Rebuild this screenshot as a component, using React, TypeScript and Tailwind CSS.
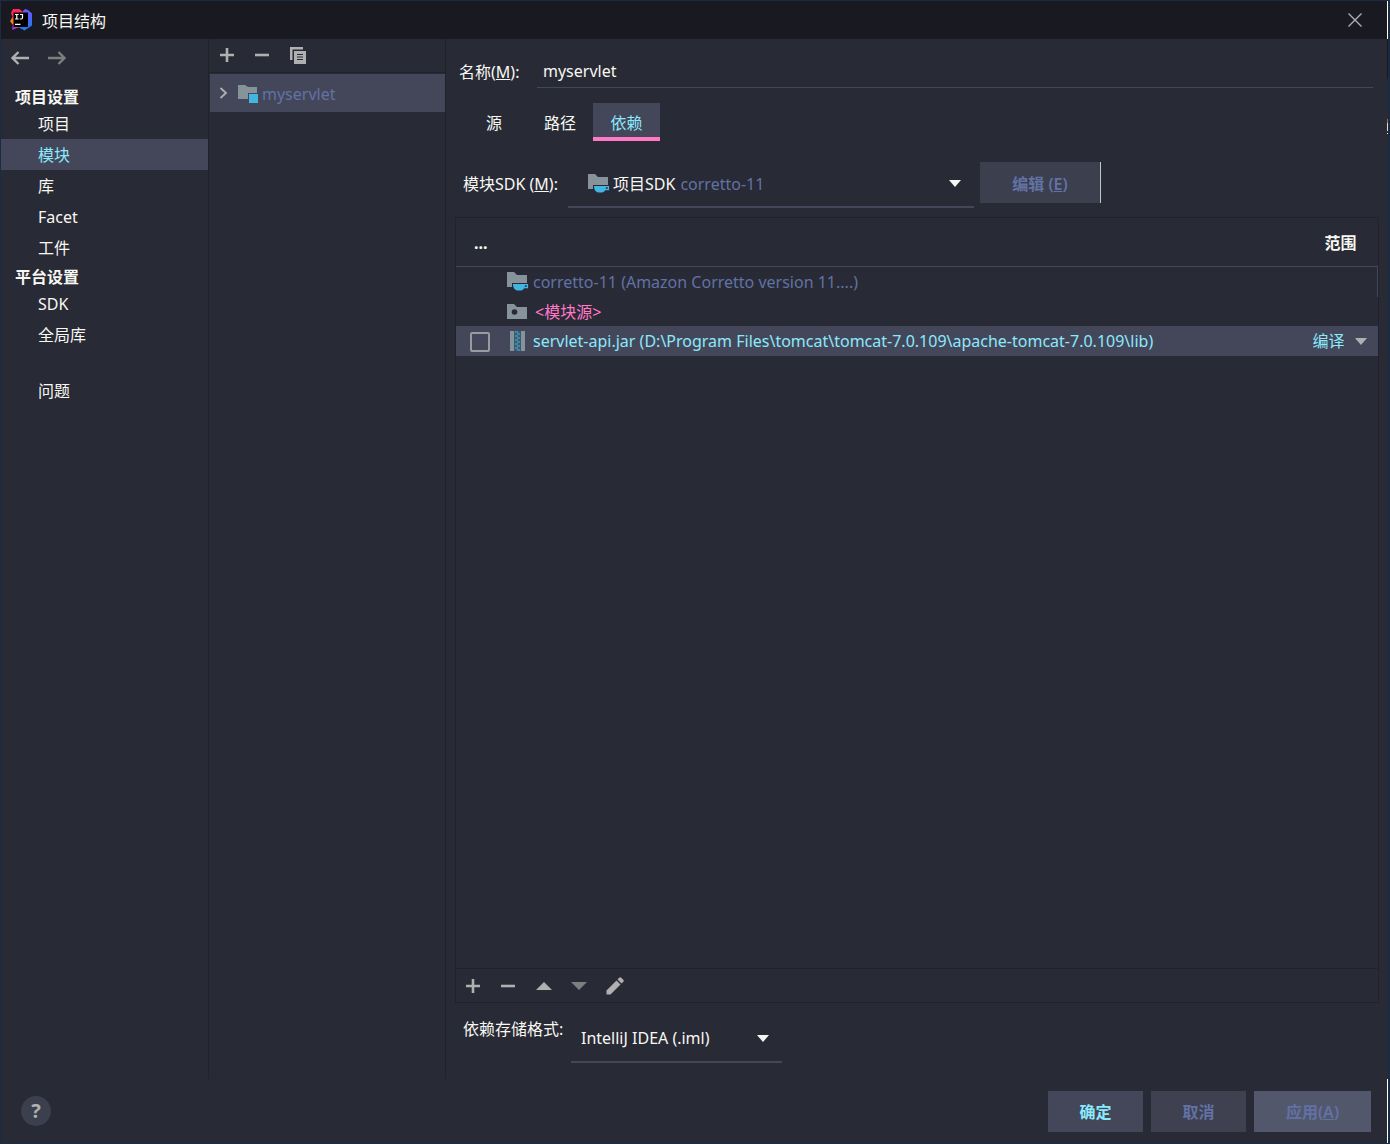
import React from 'react';

interface NavGroup {
  title: string;
  items: string[];
}

const navGroups: NavGroup[] = [
  { title: '项目设置', items: ['项目', '模块', '库', 'Facet', '工件'] },
  { title: '平台设置', items: ['SDK', '全局库'] },
];

/* ---------- icons ---------- */

const IdeaLogo: React.FC = () => (
  <svg width="24" height="24" viewBox="0 0 24 24" aria-hidden="true">
    <defs>
      <linearGradient id="ideaPink" x1="0" y1="0" x2="0" y2="1">
        <stop offset="0" stopColor="#fe2857" />
        <stop offset="0.55" stopColor="#f8365a" />
        <stop offset="1" stopColor="#9039d0" />
      </linearGradient>
      <linearGradient id="ideaBlue" x1="0" y1="0" x2="0" y2="1">
        <stop offset="0" stopColor="#6b57ff" />
        <stop offset="1" stopColor="#1d7bf0" />
      </linearGradient>
    </defs>
    <path d="M13 4L16 1L19 2L23 5.500V17.500L15.500 22.500L9 19Z" fill="url(#ideaBlue)" />
    <path d="M4 1H10.500L16 6L11 19L3 22L4 15L2 11L3.500 9L2 5Z" fill="url(#ideaPink)" />
    <path d="M1 13L4.500 9.500L6 15L3.500 16.500Z" fill="#fc801d" />
    <rect x="4.500" y="4.500" width="14.500" height="14.500" fill="#000" />
    <path d="M6 6.500H9.600M7.800 6.500V11M6 11H9.600M11 6.500H13.500V9.800Q13.500 11 12.200 11H10.800M6 16.300H11.500" stroke="#fff" strokeWidth="1.200" fill="none" />
  </svg>
);

const ArrowIcon: React.FC<{ flip?: boolean }> = ({ flip }) => (
  <svg width="18" height="14" viewBox="0 0 18 14" aria-hidden="true" className={flip ? 'rotate-180' : ''}>
    <path d="M7.500 1L1.500 7L7.500 13M2 7H18" fill="none" stroke="currentColor" strokeWidth="2.400" />
  </svg>
);

const PlusIcon: React.FC = () => (
  <svg width="14" height="14" viewBox="0 0 14 14" aria-hidden="true">
    <path d="M0 7H14M7 0V14" stroke="currentColor" strokeWidth="2.600" />
  </svg>
);

const MinusIcon: React.FC = () => (
  <svg width="14" height="14" viewBox="0 0 14 14" aria-hidden="true">
    <path d="M0 7H14" stroke="currentColor" strokeWidth="2.600" />
  </svg>
);

const CopyIcon: React.FC = () => (
  <svg width="16" height="17" viewBox="0 0 16 17" aria-hidden="true">
    <path d="M0 0H13V2.500H2.500V13H0Z" fill="currentColor" />
    <path d="M4 4H16V17H4Z" fill="currentColor" />
    <path d="M7 7.500H13M7 10H13M7 12.500H13" stroke="#282a36" strokeWidth="1.200" />
  </svg>
);

const TriangleIcon: React.FC<{ up?: boolean; className?: string }> = ({ up, className }) => (
  <svg width="16" height="8" viewBox="0 0 16 8" aria-hidden="true" className={className}>
    <path d={up ? 'M8 0L16 8H0Z' : 'M0 0H16L8 8Z'} fill="currentColor" />
  </svg>
);

const ChevronDown: React.FC<{ className?: string }> = ({ className = '' }) => (
  <svg width="12" height="7" viewBox="0 0 12 7" aria-hidden="true" className={`pointer-events-none shrink-0 ${className}`}>
    <path d="M0 0H12L6 7Z" fill="currentColor" />
  </svg>
);

const PencilIcon: React.FC = () => (
  <svg width="18" height="18" viewBox="0 0 18 18" aria-hidden="true">
    <path d="M0.500 17.500V13.500L10.500 3.500L14.500 7.500L4.500 17.500Z" fill="currentColor" />
    <path d="M11.500 2.500L13.500 0.500Q14.200 0 15 0.500L17.500 3Q18 3.800 17.500 4.500L15.500 6.500Z" fill="currentColor" />
  </svg>
);

const ModuleIcon: React.FC = () => (
  <svg width="20" height="19" viewBox="0 0 20 19" aria-hidden="true">
    <path d="M0 1H7L10 3H19V9H10V15H0Z" fill="#87939a" />
    <rect x="11" y="10" width="9" height="9" fill="#40b6e0" />
  </svg>
);

const SdkIcon: React.FC = () => (
  <svg width="22" height="19" viewBox="0 0 22 19" aria-hidden="true">
    <path d="M0 0H7L10 3H20V11H5V15H0Z" fill="#87939a" />
    <path d="M6 12H18V13Q17.500 18 14 18.500H10Q6.500 17.500 6 13Z" fill="#40b6e0" />
    <path d="M17 12.600H20.400V15.500H17" fill="none" stroke="#40b6e0" strokeWidth="1.300" />
  </svg>
);

const SourceIcon: React.FC = () => (
  <svg width="20" height="15" viewBox="0 0 20 15" aria-hidden="true">
    <path d="M0 0H7L10 3H20V15H0Z" fill="#87939a" />
    <circle cx="7.500" cy="8" r="2.800" fill="#282a36" />
  </svg>
);

const JarIcon: React.FC = () => (
  <svg width="15" height="20" viewBox="0 0 15 20" aria-hidden="true">
    <path d="M0 0H4V20H0ZM11 0H15V20H11Z" fill="#87939a" />
    <rect x="4" width="7" height="20" fill="#3b5a6e" />
    <path d="M5 1H8M7 3H10M5 5H8M7 7H10M5 9H8M7 11H10M5 13H8M7 15H10M5 17H8M7 19H10" stroke="#40b6e0" strokeWidth="1.200" />
  </svg>
);

/* ---------- panels ---------- */

const TitleBar: React.FC = () => (
  <header className="flex h-[38px] items-center bg-[#191a21] pl-2 pr-5">
    <IdeaLogo />
    <h1 className="ml-[9px] flex-1 pt-0.5 text-base">项目结构</h1>
    <button type="button" aria-label="关闭" className="flex h-6 w-6 items-center justify-center text-[#b0b0b0]">
      <svg width="14" height="14" viewBox="0 0 14 14" aria-hidden="true">
        <path d="M0.500 0.500L13.500 13.500M13.500 0.500L0.500 13.500" stroke="currentColor" strokeWidth="1.400" />
      </svg>
    </button>
  </header>
);

const NavItem: React.FC<{ label: string; active?: boolean }> = ({ label, active }) => (
  <button
    type="button"
    className={`flex h-[31px] w-full items-center pl-[37px] text-left ${active ? 'bg-[#44475a] text-[#8be9fd]' : ''}`}
  >
    {label}
  </button>
);

const Sidebar: React.FC = () => (
  <nav className="w-[208px] shrink-0 border-r border-[#21222c]">
    <div className="flex h-11 items-center gap-[19px] pb-1.5 pl-2.5">
      <button type="button" aria-label="后退" className="text-[#b0b0b0]"><ArrowIcon /></button>
      <button type="button" aria-label="前进" className="text-[#7d7e80]"><ArrowIcon flip /></button>
    </div>
    {navGroups.map((group) => (
      <section key={group.title}>
        <h2 className="h-[25px] pl-3.5 font-bold leading-7">{group.title}</h2>
        {group.items.map((item) => (
          <NavItem key={item} label={item} active={item === '模块'} />
        ))}
      </section>
    ))}
    <div className="mt-[25px]">
      <NavItem label="问题" />
    </div>
  </nav>
);

const ModuleTree: React.FC = () => (
  <aside className="w-[237px] shrink-0 border-r border-[#21222c]">
    <div className="mb-px flex h-[34px] items-center gap-[21px] border-b border-[#21222c] pb-px pl-[11px] text-[#b0b0b0]">
      <button type="button" aria-label="添加"><PlusIcon /></button>
      <button type="button" aria-label="移除"><MinusIcon /></button>
      <button type="button" aria-label="复制"><CopyIcon /></button>
    </div>
    <button type="button" className="ml-px flex h-[38px] w-[235px] items-center bg-[#44475a] pl-[9px] text-[#6272a4]">
      <svg width="9" height="12" viewBox="0 0 9 12" aria-hidden="true" className="mr-2.5 text-[#b0b0b0]">
        <path d="M1.500 1L7 6L1.500 11" fill="none" stroke="currentColor" strokeWidth="1.800" />
      </svg>
      <ModuleIcon />
      <span className="ml-1 pt-px">myservlet</span>
    </button>
  </aside>
);

const DependencyTable: React.FC = () => (
  <div className="mr-2 flex flex-1 flex-col border border-[#21222c]">
    <div className="flex-1">
      <table className="w-full border-collapse text-left">
        <thead>
          <tr className="h-12 border-b border-[#44475a]">
            <th colSpan={2} className="pl-[18px] pt-0.5 font-bold">...</th>
            <th className="pr-[21px] pt-0.5 text-right font-bold">范围</th>
          </tr>
        </thead>
        <tbody>
          <tr className="h-[31px] text-[#6272a4]">
            <td className="w-[51px]" />
            <td>
              <div className="flex items-center gap-1"><SdkIcon />corretto-11 (Amazon Corretto version 11....)</div>
            </td>
            <td className="border-r border-[#44475a]" />
          </tr>
          <tr className="h-[29px] text-[#ff79c6]">
            <td />
            <td>
              <div className="flex items-center gap-2"><SourceIcon />&lt;模块源&gt;</div>
            </td>
            <td />
          </tr>
          <tr className="h-[30px] bg-[#44475a] text-[#8be9fd]">
            <td>
              <input
                type="checkbox"
                aria-label="导出"
                className="ml-3.5 mt-0.5 block h-5 w-5 appearance-none rounded-xs border-2 border-[#9a9ba0]"
              />
            </td>
            <td>
              <div className="flex items-center gap-2 pl-[3px]">
                <JarIcon />
                servlet-api.jar (D:\Program Files\tomcat\tomcat-7.0.109\apache-tomcat-7.0.109\lib)
              </div>
            </td>
            <td>
              <div className="flex items-center justify-end pr-[11px]">
                <select aria-label="范围" className="w-10 appearance-none bg-transparent outline-none">
                  <option>编译</option>
                </select>
                <ChevronDown className="ml-0.5 text-[#b0b0b0]" />
              </div>
            </td>
          </tr>
        </tbody>
      </table>
    </div>
    <div className="flex h-[34px] items-center gap-[21px] border-t border-[#21222c] pl-2.5 text-[#b0b0b0]">
      <button type="button" aria-label="添加"><PlusIcon /></button>
      <button type="button" aria-label="移除"><MinusIcon /></button>
      <button type="button" aria-label="上移"><TriangleIcon up /></button>
      <button type="button" aria-label="下移" className="-ml-0.5"><TriangleIcon className="text-[#7d7e80]" /></button>
      <button type="button" aria-label="编辑" className="-ml-0.5"><PencilIcon /></button>
    </div>
  </div>
);

const ModuleEditor: React.FC = () => (
  <main className="flex min-w-0 flex-1 flex-col pl-[9px]">
    <div className="mr-3.5 mt-4 flex h-[33px] items-center pl-1">
      <label htmlFor="module-name" className="w-[78px] shrink-0">名称(<u>M</u>):</label>
      <input
        id="module-name"
        type="text"
        defaultValue="myservlet"
        className="h-full min-w-0 flex-1 border-b border-[#44475a] bg-transparent px-1.5 outline-none"
      />
    </div>

    <div role="tablist" className="mt-[15px] flex h-[38px] pl-1.5">
      <button type="button" role="tab" aria-selected="false" className="w-[66px] pt-0.5">源</button>
      <button type="button" role="tab" aria-selected="false" className="w-[66px] pt-0.5">路径</button>
      <button
        type="button"
        role="tab"
        aria-selected="true"
        className="w-[67px] border-b-4 border-[#ff79c6] bg-[#44475a] pt-1.5 text-[#8be9fd]"
      >
        依赖
      </button>
    </div>

    <div className="mt-[21px] flex pl-2">
      <label htmlFor="module-sdk" className="w-[105px] shrink-0 leading-[44px]">模块SDK (<u>M</u>):</label>
      <div className="flex h-[46px] w-[406px] items-center border-b-2 border-[#44475a] pb-px pl-5 pr-[13px]">
        <SdkIcon />
        <span className="ml-[3px] mr-[5px]">项目SDK</span>
        <select id="module-sdk" className="min-w-0 flex-1 appearance-none bg-transparent text-[#6272a4] outline-none">
          <option>corretto-11</option>
        </select>
        <ChevronDown className="text-[#f8f8f2]" />
      </div>
      <button
        type="button"
        className="ml-1.5 h-[41px] w-[121px] border-r border-[#c4c5ca] bg-[#3c3f4e] pt-0.5 font-semibold text-[#6272a4]"
      >
        编辑 (<u>E</u>)
      </button>
    </div>

    <div className="mt-[9px] flex flex-1">
      <DependencyTable />
    </div>

    <div className="mb-4 mt-3 flex h-12 pl-2">
      <label htmlFor="storage-format" className="w-[108px] shrink-0 pt-0.5">依赖存储格式:</label>
      <div className="flex w-[211px] items-center border-b-2 border-[#44475a] pl-2.5 pr-[13px]">
        <select id="storage-format" className="min-w-0 flex-1 appearance-none bg-transparent outline-none">
          <option>IntelliJ IDEA (.iml)</option>
        </select>
        <ChevronDown className="text-[#f8f8f2]" />
      </div>
    </div>
  </main>
);

const Footer: React.FC = () => (
  <footer className="flex h-16 items-center gap-2 pl-5 pr-4">
    <button
      type="button"
      aria-label="帮助"
      className="mr-auto h-[30px] w-[30px] rounded-full bg-[#3c3f4e] text-xl font-bold leading-[30px] text-[#b0b0b0]"
    >
      ?
    </button>
    <button type="button" className="h-[41px] w-[95px] bg-[#44475a] pt-0.5 font-semibold text-[#8be9fd]">确定</button>
    <button type="button" className="h-[41px] w-[95px] bg-[#3f4151] pt-0.5 font-semibold text-[#6272a4]">取消</button>
    <button type="button" className="h-[41px] w-[117px] bg-[#53576c] pt-0.5 font-semibold text-[#6272a4]">应用(<u>A</u>)</button>
  </footer>
);

/* thin strip of the desktop visible past the window's right edge */
const EdgeStrip: React.FC = () => (
  <div className="flex w-px flex-col" aria-hidden="true">
    <div className="h-[38px] bg-white" />
    <div className="h-10 bg-[#191a21]" />
    <div className="mt-10 h-1 bg-[#b0685a]" />
    <div className="h-2 bg-[#e8dcc0]" />
    <div className="mt-0.5 h-px bg-white" />
    <div className="mt-auto h-16 bg-white" />
  </div>
);

const App: React.FC = () => {
  return (
    <div className="flex min-h-screen border-y border-l border-r-2 border-[#1b2c42] bg-[#282a36] font-['Noto_Sans','Noto_Sans_CJK_SC',sans-serif] text-base leading-6 text-[#f8f8f2]">
      <div className="flex min-w-0 flex-1 flex-col">
        <TitleBar />
        <div className="flex flex-1">
          <Sidebar />
          <ModuleTree />
          <ModuleEditor />
        </div>
        <Footer />
      </div>
      <EdgeStrip />
    </div>
  );
};

export default App;
